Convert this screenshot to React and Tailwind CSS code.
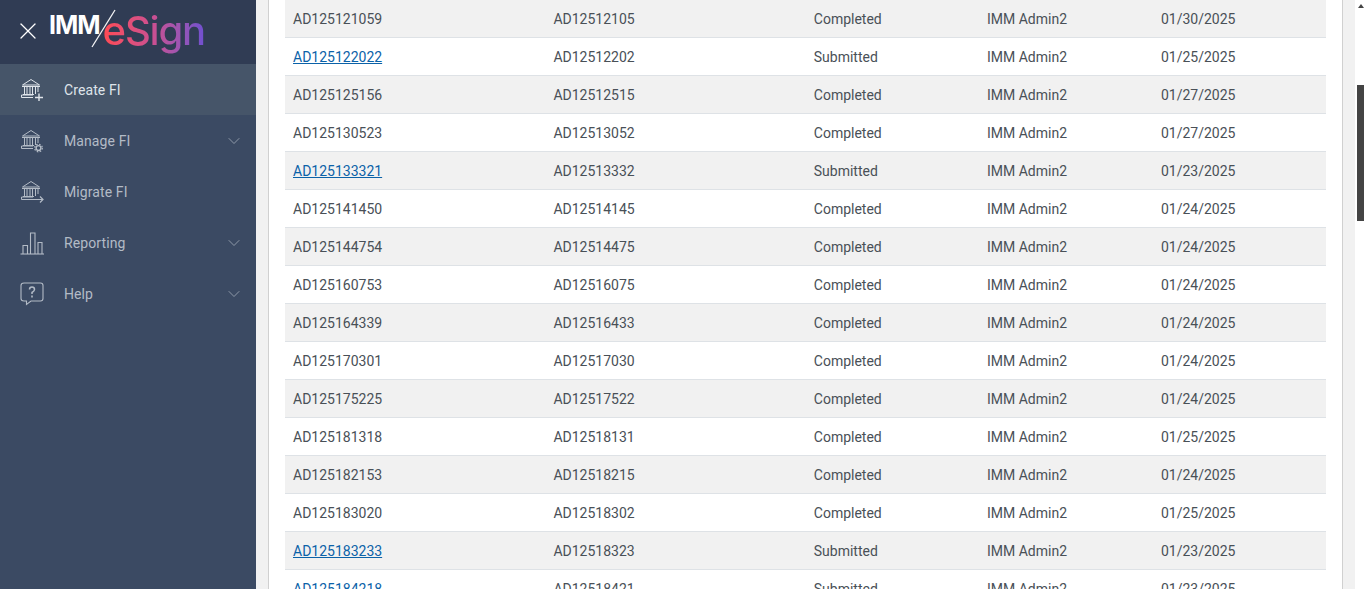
import React from "react";
import { ChevronDown, X } from "lucide-react";

const rows = [
  ["AD125121059", "AD12512105", "Completed", "01/30/2025"],
  ["AD125122022", "AD12512202", "Submitted", "01/25/2025"],
  ["AD125125156", "AD12512515", "Completed", "01/27/2025"],
  ["AD125130523", "AD12513052", "Completed", "01/27/2025"],
  ["AD125133321", "AD12513332", "Submitted", "01/23/2025"],
  ["AD125141450", "AD12514145", "Completed", "01/24/2025"],
  ["AD125144754", "AD12514475", "Completed", "01/24/2025"],
  ["AD125160753", "AD12516075", "Completed", "01/24/2025"],
  ["AD125164339", "AD12516433", "Completed", "01/24/2025"],
  ["AD125170301", "AD12517030", "Completed", "01/24/2025"],
  ["AD125175225", "AD12517522", "Completed", "01/24/2025"],
  ["AD125181318", "AD12518131", "Completed", "01/25/2025"],
  ["AD125182153", "AD12518215", "Completed", "01/24/2025"],
  ["AD125183020", "AD12518302", "Completed", "01/25/2025"],
  ["AD125183233", "AD12518323", "Submitted", "01/23/2025"],
  ["AD125184218", "AD12518421", "Submitted", "01/23/2025"],
];

// shared bank drawing for the three FI items
function Bank({ children }) {
  return (
    <svg width="24" height="24" viewBox="0 0 24 24" fill="none" stroke="currentColor" strokeWidth="1">
      <path d="M2.5 7 L11 1.5 L19.5 7 Z" />
      <path d="M2 8.5 H20" />
      <path d="M4.5 9 V16 M7 9 V16 M10 9 V16 M12.5 9 V16 M15.5 9 V16 M18 9 V14" />
      <path d="M3 16.5 H14 M1.5 19.5 H13 M1.5 19.5 V17 H13" />
      {children}
    </svg>
  );
}

const PlusBank = () => (
  <Bank>
    <path d="M19 15.5 V23 M15 19.5 H23" strokeWidth="1.4" />
  </Bank>
);

const GearBank = () => (
  <Bank>
    <circle cx="18.5" cy="19" r="2.4" strokeWidth="1.4" />
    <circle cx="18.5" cy="19" r="3.8" strokeWidth="1.2" strokeDasharray="1.6 1.4" />
  </Bank>
);

const ArrowBank = () => (
  <Bank>
    <path d="M13 19.5 H23 M20 16.5 L23 19.5 L20 22.5" strokeWidth="1.2" />
  </Bank>
);

const Bars = () => (
  <svg width="24" height="24" viewBox="0 0 24 24" fill="none" stroke="currentColor" strokeWidth="1.1">
    <path d="M0.5 23 H24" />
    <path d="M3 23 V14.5 H7.5 V23 M10.5 23 V2 H15 V23 M18 23 V11.5 H22 V23" />
  </svg>
);

const HelpBubble = () => (
  <svg width="24" height="24" viewBox="0 0 24 24" fill="none" stroke="currentColor" strokeWidth="1.1">
    <path d="M4 1 H20.5 Q23 1 23 3.5 V16.5 Q23 19 20.5 19 H11 L6.5 22.5 V19 H4 Q1 19 1 16.5 V3.5 Q1 1 4 1 Z" />
    <path d="M9.5 7.5 Q9.5 5 12 5 Q14.5 5 14.5 7.5 Q14.5 9 12 10.5 V12" strokeWidth="1.5" />
    <path d="M12 13.5 V15.5" strokeWidth="1.6" />
  </svg>
);

const menu = [
  { label: "Create FI", icon: PlusBank, active: true },
  { label: "Manage FI", icon: GearBank, caret: true },
  { label: "Migrate FI", icon: ArrowBank },
  { label: "Reporting", icon: Bars, caret: true },
  { label: "Help", icon: HelpBubble, caret: true },
];

function Logo() {
  return (
    <div className="flex items-start h-[64px] ml-[7px]">
      <span className="font-['Inter',sans-serif] font-bold text-[25px] leading-none text-white mt-[13px] tracking-[-1px]">IMM</span>
      <svg width="26" height="40" viewBox="0 0 26 40" className="mt-[9px] -ml-[9px] shrink-0" fill="none" stroke="#f4f4f6" strokeWidth="1.3">
        <path d="M1 38 L24 1" />
      </svg>
      <span className="font-['Inter',sans-serif] font-medium text-[40px] leading-[50px] mt-[6px] -ml-[14px] tracking-[-1.2px] text-transparent bg-clip-text bg-gradient-to-r from-[#ff4a52] via-[#c94f92] to-[#6f4fd0] pb-[8px]">
        eSign
      </span>
    </div>
  );
}

function Sidebar() {
  return (
    <aside className="w-[256px] shrink-0 bg-[#3b4a63] font-['Roboto',sans-serif] text-sm">
      <div className="h-[64px] bg-[#303c54] flex items-start pl-[14px]">
        <X size={28} strokeWidth={1.1} className="text-white mt-[17px] shrink-0" />
        <Logo />
      </div>
      {menu.map((item) => {
        const Icon = item.icon;
        return (
          <div
            key={item.label}
            className={
              item.active
                ? "h-[51px] flex items-center pl-[20px] pr-[12px] bg-[#465569] text-[#dfe4ea]"
                : "h-[51px] flex items-center pl-[20px] pr-[12px] text-[#b3bbc6]"
            }
          >
            <span className="w-[44px] shrink-0">
              <Icon />
            </span>
            <span className="flex-1 tracking-[0.1px]">{item.label}</span>
            {item.caret && <ChevronDown size={20} strokeWidth={0.9} className="text-[#a9b2bf]" />}
          </div>
        );
      })}
    </aside>
  );
}

function Row({ row, index }) {
  const submitted = row[2] === "Submitted";
  return (
    <div
      className={
        index % 2 === 0
          ? "grid grid-cols-[260.4px_260.4px_173.2px_174px_173px] h-[38px] items-center border-b border-[#dee2e6] bg-[#f1f1f1]"
          : "grid grid-cols-[260.4px_260.4px_173.2px_174px_173px] h-[38px] items-center border-b border-[#dee2e6] bg-white"
      }
    >
      <div className="px-2">
        {submitted ? <a href="#" className="text-[#0b62a8] underline">{row[0]}</a> : row[0]}
      </div>
      <div className="px-2">{row[1]}</div>
      <div className="px-2">{row[2]}</div>
      <div className="px-2">IMM Admin2</div>
      <div className="px-2">{row[3]}</div>
    </div>
  );
}

export default function App() {
  return (
    <div className="flex h-screen overflow-hidden bg-[#f1f1f1]">
      <Sidebar />
      <main className="flex-1 overflow-hidden pl-[12px] pr-[12px]">
        <div className="h-full bg-white border-x border-[#d0d0d0] px-[16px] font-['Roboto',sans-serif] text-sm text-[#495057]">
          {rows.map((row, i) => (
            <Row key={row[0]} row={row} index={i} />
          ))}
        </div>
      </main>
      <div className="w-[11px] shrink-0 bg-white pl-[2px] pt-[4px]">
        <div className="w-0 h-0 ml-[1px] border-x-[3px] border-b-[4px] border-x-transparent border-b-[#444444]" />
        <div className="w-[7px] h-[136px] mt-[77px] bg-[#444444]" />
      </div>
    </div>
  );
}
